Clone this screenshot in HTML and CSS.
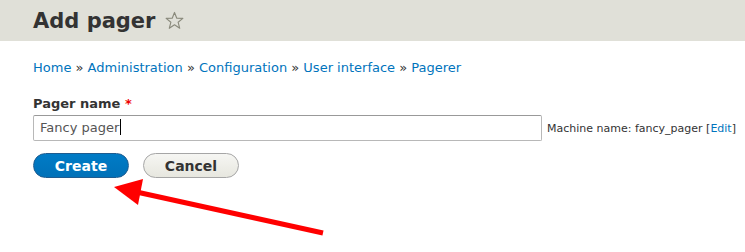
FILE: index.html
```html
<!DOCTYPE html>
<html lang="en">
    <head>
        <meta charset="UTF-8" />
        <title>Add pager</title>
        <link rel="stylesheet" href="styles.css">
    </head>
    <body>
        <header class="page-header">
            <h1 class="page-title">Add pager
                <svg class="shortcut" width="19" height="19" viewBox="0 0 20 20">
                    <polygon points="10,1.5 12.4,7.6 18.8,7.8 13.8,11.8 15.5,18.2 10,14.5 4.5,18.2 6.2,11.8 1.2,7.8 7.6,7.6" fill="none" stroke="#8a8a7c" stroke-width="1.2" stroke-linejoin="round" />
                </svg>
            </h1>
        </header>
        <main class="content">
            <nav class="breadcrumb">
                <a href="#">Home</a> » <a href="#">Administration</a> »
                <a href="#">Configuration</a> » <a href="#">User interface</a> »
                <a href="#">Pagerer</a>
            </nav>
            <form class="pager-form">
                <label class="field-label" for="name">Pager name <span class="required">*</span></label>
                <div class="field-row">
                    <div class="text-input" id="name">Fancy pager<span class="caret"></span></div>
                    <span class="machine-name">Machine name: fancy_pager [<a href="#">Edit</a>]</span>
                </div>
                <div class="actions">
                    <button type="button" class="button button-primary">Create</button>
                    <button type="button" class="button">Cancel</button>
                </div>
            </form>
        </main>
        <div class="annotation">
            <svg xmlns="http://www.w3.org/2000/svg" width="745" height="252" viewBox="0 0 745 252">
                <path d="M323 233 L132 191" stroke="#ff0000" stroke-width="5" fill="none" />
                <path d="M114 187 L143 179 L138 205 Z" fill="#ff0000" />
            </svg>
        </div>
    </body>
</html>
```

FILE: styles.css
```css
* {
    margin: 0;
    box-sizing: border-box;
}

html,
body {
    min-height: 252px;
}

body {
    margin: 0;
    position: relative;
    background: #fff;
    color: #333;
    font-family: "DejaVu Sans", Verdana, sans-serif;
    font-size: 13px;
}

a {
    color: #0074bd;
    text-decoration: none;
}

.page-header {
    height: 41px;
    padding: 6px 33px 0;
    background: #e0e0d8;
}

.page-title {
    display: flex;
    align-items: center;
    gap: 10px;
    font-size: 21px;
    line-height: 30px;
    font-weight: bold;
    color: #333;
}

.shortcut {
    display: block;
    margin-top: -1px;
}

.content {
    padding: 18px 0 0 33px;
}

.breadcrumb {
    line-height: 17px;
    color: #333;
}

.pager-form {
    margin-top: 19px;
}

.field-label {
    display: block;
    font-weight: bold;
    line-height: 17px;
}

.required {
    color: #e00;
}

.field-row {
    display: flex;
    align-items: center;
    gap: 5px;
    margin-top: 3px;
}

.text-input {
    flex: none;
    width: 509px;
    height: 26px;
    padding: 3px 6px;
    border: 1px solid #b8b8b8;
    border-top-color: #999;
    border-radius: 2px;
    font-size: 13px;
    line-height: 18px;
    color: #555;
}

.caret {
    display: inline-block;
    width: 1px;
    height: 16px;
    margin-left: 1px;
    vertical-align: -3px;
    background: #000;
}

.machine-name {
    white-space: nowrap;
    font-size: 11px;
    color: #333;
}

.actions {
    display: flex;
    gap: 14px;
    margin-top: 12px;
}

.button {
    width: 96px;
    height: 25px;
    padding: 0;
    border: 1px solid #a6a6a6;
    border-radius: 20em;
    background: linear-gradient(#f6f6f3, #e7e7df);
    color: #333;
    font-family: inherit;
    font-size: 14px;
    font-weight: bold;
}

.button-primary {
    border-color: #1e5c90;
    background: linear-gradient(#007bc6, #0071b8);
    color: #fff;
}

.annotation {
    position: absolute;
    top: 0;
    left: 0;
    width: 745px;
    height: 252px;
    pointer-events: none;
}

.annotation svg {
    display: block;
}
```
